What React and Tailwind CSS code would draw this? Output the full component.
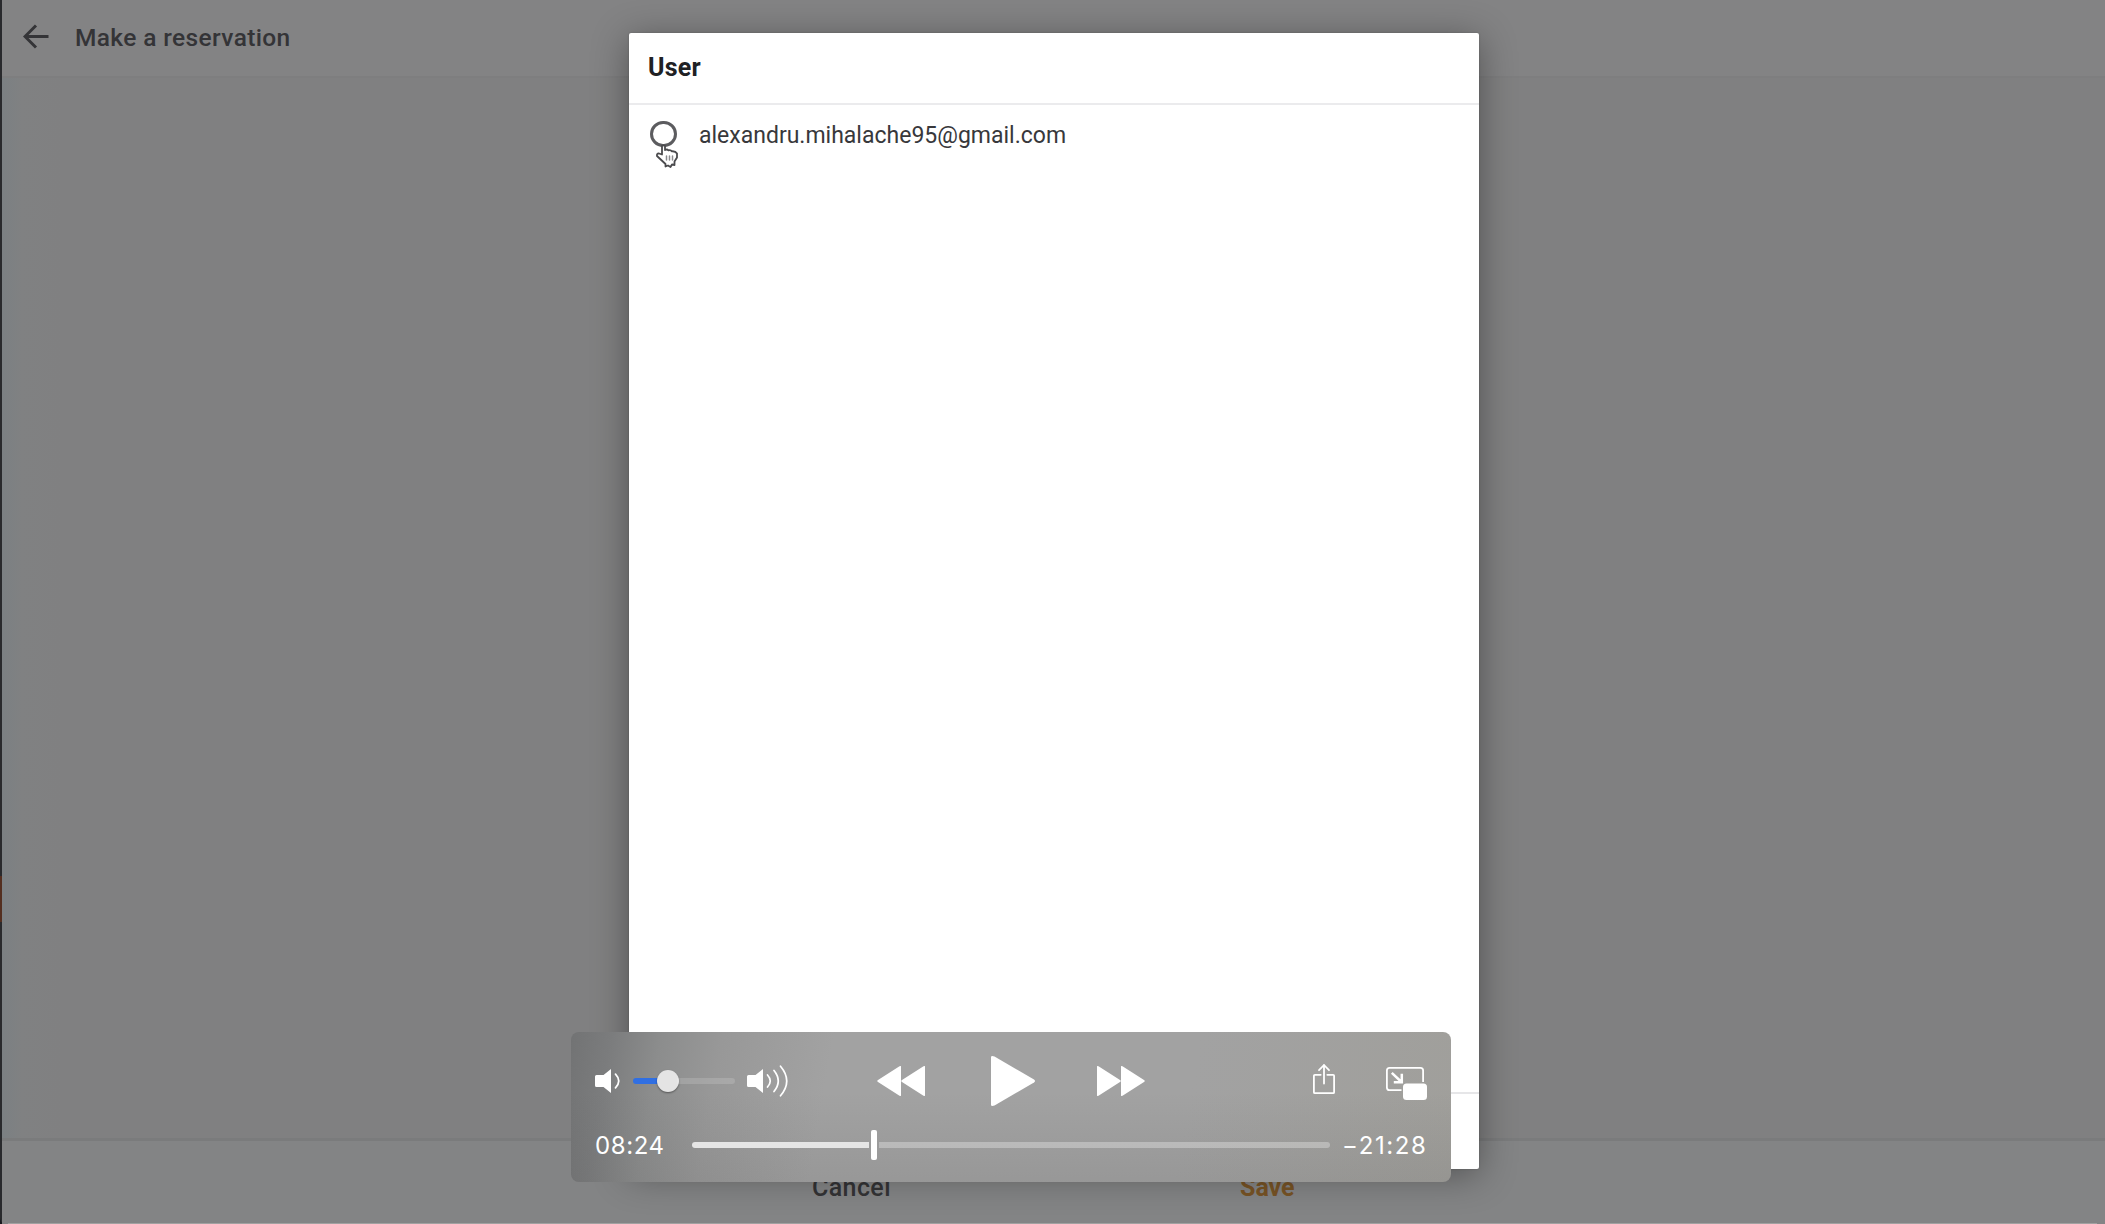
import React from "react";

function BackArrow() {
  return (
    <svg className="h-[26px] w-[26px] shrink-0" viewBox="0 0 26 26" fill="none" stroke="currentColor" strokeWidth="3">
      <path d="M25.500 12.500H2.500M13 1.500L2 12.500l11 11" />
    </svg>
  );
}

function HandCursor() {
  return (
    <svg className="absolute left-[26px] top-[38px] h-[26px] w-[24px]" viewBox="0 0 24 26" fill="white" stroke="#4a4a4d" strokeWidth="1.800" strokeLinejoin="round" strokeLinecap="round">
      <path d="M7 11.500V3Q8.500 1.800 10 3V7Q12 5.800 13.500 7.300Q15.500 6.500 17 8.300Q20.500 8 22 10.500V14.500L19.500 18.500V22L17 21.500L15.500 24L13 22.500L10.500 23.500V21L2 13Q1.500 10.300 4 10.500Z" />
      <path d="M11.500 13v4M14.500 13v4M17.500 13v4" stroke="#8b8b8e" strokeWidth="1.500" />
    </svg>
  );
}

function Speaker({ loud }) {
  return (
    <svg className={loud ? "ml-[12px] h-[32px] w-[42px] shrink-0" : "h-[32px] w-[26px] shrink-0"} viewBox={loud ? "0 0 42 32" : "0 0 26 32"} fill="none">
      <path d="M1.500 10H8.500L16 4V28L8.500 22H1.500Q0 22 0 20.500V11.500Q0 10 1.500 10Z" fill="white" />
      <path d={loud ? "M20.500 10q5.500 6 0 12" : "M20.500 9.200q6.500 6.800 0 13.600"} stroke="white" strokeWidth="1.700" strokeLinecap="round" />
      {loud && <path d="M27 5.500Q35.500 16 27 26.500M33.500 1.200Q46 16 33.500 30.800" stroke="white" strokeWidth="1.700" strokeLinecap="round" />}
    </svg>
  );
}

function Rewind() {
  return (
    <svg className="ml-[88px] h-[30px] w-[48px] shrink-0" viewBox="0 0 48 30" fill="white">
      <path d="M24 0V30L22.500 29.700L1 16Q-.5 15 1 14L22.500 .3ZM48 0V30L46.500 29.700L25 16Q23.500 15 25 14L46.500 .3Z" />
    </svg>
  );
}

function Play() {
  return (
    <svg className="ml-[66px] h-[50px] w-[44px] shrink-0" viewBox="0 0 44 50" fill="white">
      <path d="M0 1.200Q0 0 1.300 0L3.500 .5L43 23.500Q45 25 43 26.500L3.500 49.500L1.300 50Q0 50 0 48.800Z" />
    </svg>
  );
}

function Forward() {
  return (
    <svg className="ml-[62px] h-[30px] w-[48px] shrink-0" viewBox="0 0 48 30" fill="white">
      <path d="M0 0L1.500 .3L23 14Q24.500 15 23 16L1.500 29.700L0 30ZM24 0L25.500 .3L47 14Q48.500 15 47 16L25.500 29.700L24 30Z" />
    </svg>
  );
}

function Share() {
  return (
    <svg className="relative -top-[2px] ml-[168px] h-[32px] w-[24px] shrink-0" viewBox="0 0 24 32" fill="none" stroke="white" strokeWidth="1.800" strokeLinecap="round" strokeLinejoin="round">
      <path d="M7.700 11.800H1.900Q.9 11.800 .9 12.800V29.200Q.9 30.200 1.900 30.200H20.100Q21.100 30.200 21.100 29.200V12.800Q21.100 11.800 20.100 11.800H14.300" />
      <path d="M11 20.500V2M6 7.200L11 2L16 7.200" />
    </svg>
  );
}

function PictureInPicture() {
  return (
    <svg className="relative top-[3px] ml-[49px] h-[34px] w-[42px] shrink-0" viewBox="0 0 42 34" fill="none">
      <path d="M15.500 23.200H3.500Q.9 23.200 .9 20.600V3.500Q.9 .9 3.500 .9H34.500Q37.100 .9 37.100 3.500V15" stroke="white" strokeWidth="1.800" />
      <path d="M5.800 5.800L15.500 15M7.800 15.200H15.800V6.800" stroke="white" strokeWidth="2.500" />
      <rect x="17" y="16.500" width="24" height="16.500" rx="3.500" fill="white" />
    </svg>
  );
}

function PlayerControls() {
  return (
    <section className="absolute left-[571px] top-[1032px] flex h-[150px] w-[880px] flex-col gap-6 rounded-lg bg-[linear-gradient(180deg,transparent_0,transparent_40%,rgba(60,60,60,0.1)_100%),linear-gradient(100deg,#727374_0,#7b7c7d_40px,#8c8d8d_90px,#989898_150px,#a2a2a2_260px,#a2a2a2_620px,#a09f9b_100%)] pl-6 pt-6 text-white">
      <div className="flex h-[50px] items-center">
        <Speaker />
        <div className="ml-[12px] flex h-[22px] w-[102px] items-center">
          <div className="h-[6px] w-[26px] rounded-l-full bg-[#306fe2]" />
          <div className="-mx-[2px] h-[22px] w-[22px] shrink-0 rounded-full bg-[#e4e4e4] shadow-[0_1px_2px_rgba(0,0,0,0.4)]" />
          <div className="h-[6px] grow rounded-r-full bg-white/15" />
        </div>
        <Speaker loud />
        <Rewind />
        <Play />
        <Forward />
        <Share />
        <PictureInPicture />
      </div>
      <div className="flex h-[30px] items-center">
        <span className="w-[97px] shrink-0 pt-px font-['Inter',sans-serif] text-[24px] leading-[30px] tracking-[0.6px]">08:24</span>
        <div className="h-[6px] w-[177px] rounded-l-full bg-[#e5e5e5]" />
        <div className="mx-[2px] h-[30px] w-[6px] rounded-[2px] bg-white" />
        <div className="h-[6px] w-[451px] rounded-r-full bg-white/30" />
        <span className="ml-[12px] whitespace-nowrap pt-px font-['Inter',sans-serif] text-[24px] leading-[30px] tracking-[1.600px]">−21:28</span>
      </div>
    </section>
  );
}

function UserDialog() {
  return (
    <section className="absolute left-[629px] top-[33px] flex h-[1136px] w-[850px] flex-col rounded-[2px] bg-white shadow-[0_6px_36px_rgba(0,0,0,0.38),0_0_2px_rgba(0,0,0,0.2)]">
      <h2 className="flex h-[72px] items-center border-b-2 border-[#ebebed] pl-[19px] text-[25px] font-bold tracking-[0.200px] text-[#202124]">User</h2>
      <label className="flex h-[60px] items-center pl-[21px]">
        <span className="relative -top-px h-[26px] w-[27px] rounded-full border-3 border-[#5c5c5f]" />
        <span className="ml-[22px] pt-[2px] text-[23px] text-[#38383b]">alexandru.mihalache95@gmail.com</span>
      </label>
      <div className="grow" />
      <div className="h-[77px] border-t-2 border-[#e6e6e8]" />
      <div className="absolute left-0 top-[72px]">
        <HandCursor />
      </div>
    </section>
  );
}

export default function App() {
  return (
    <div className="relative h-[1224px] w-[2105px] overflow-hidden bg-[#17191d] font-['Roboto',sans-serif]">
      <main className="flex h-full flex-col rounded-b-[6px] border-l-2 border-[#292a2d] bg-[#808081]">
        <header className="flex h-[78px] items-center gap-[26px] border-b-2 border-[#7e7e7f] bg-[#838384] pb-[3px] pl-[21px] text-[#343437]">
          <BackArrow />
          <h1 className="pt-[3px] text-[24.500px] font-medium tracking-[0.370px]">Make a reservation</h1>
        </header>
        <div className="grow bg-[linear-gradient(90deg,#7b8083_0,#808182_20px,#808081_60px)]" />
        <footer className="flex h-[86px] border-t-[3px] border-[#7a7b7c] bg-[#838485] pl-[810px] pt-[31px] text-[25px] font-medium leading-[32px]">
          <span className="w-[428px] tracking-[0.400px] text-[#333335]">Cancel</span>
          <span className="font-bold text-[#775325]">Save</span>
        </footer>
      </main>
      <div className="absolute left-0 top-[876px] h-[46px] w-[2px] bg-[#542f20]" />
      <div className="absolute bottom-0 left-[8px] right-[8px] h-px bg-[#a1a1a1]" />
      <UserDialog />
      <PlayerControls />
    </div>
  );
}
